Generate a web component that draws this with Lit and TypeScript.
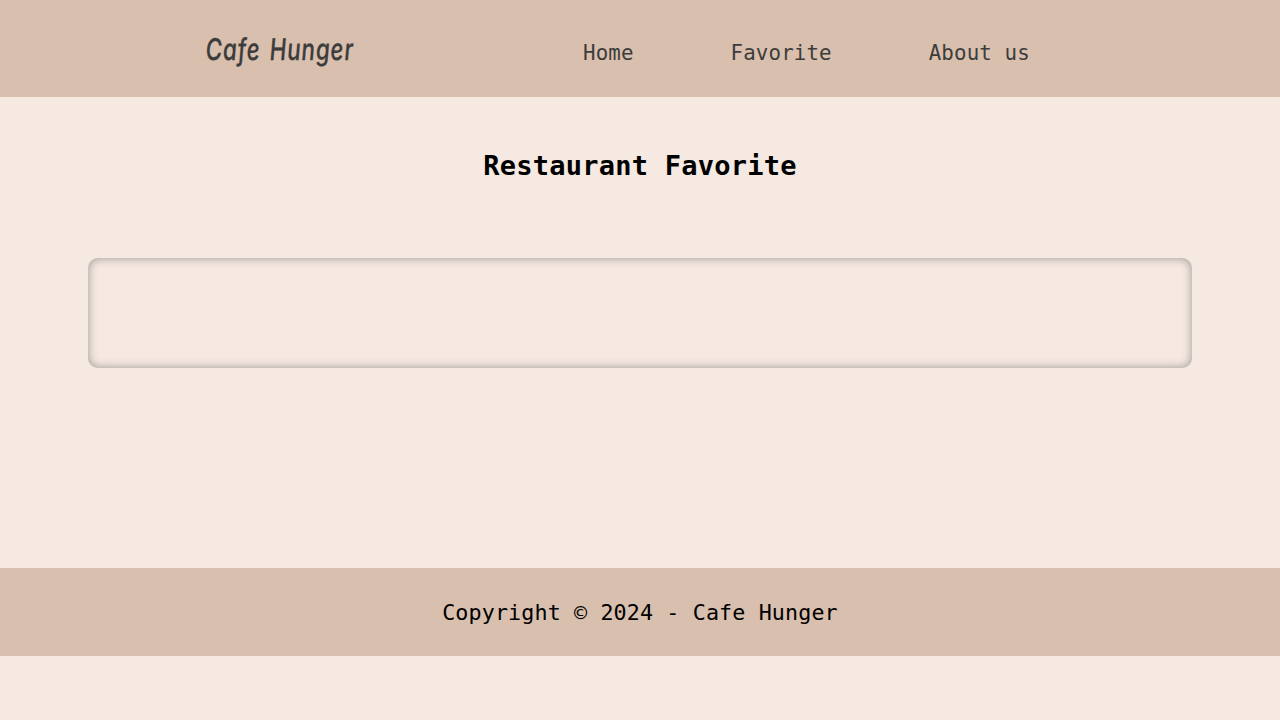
import { LitElement, html, css } from "lit";
import { customElement } from "lit/decorators.js";

@customElement("app-root")
export class AppRoot extends LitElement {
  static styles = css`
    :host {
      display: block;
      min-height: 100vh;
      background: #f5e9e1;
      color: #000;
      font-family: Consolas, "DejaVu Sans Mono", monospace;
    }
    header {
      display: flex;
      height: 97px;
      box-sizing: border-box;
      padding: 30px 0 0 206px;
      background: #d9bfad;
      color: #3c3c3c;
    }
    .brand {
      width: 377px;
      flex: none;
      font: italic 500 30px/38px Inter, sans-serif;
      font-feature-settings: "cv11" 1;
      letter-spacing: 1.2px;
      word-spacing: 3px;
      white-space: nowrap;
      -webkit-text-stroke: 0.3px #3c3c3c;
    }
    .brand span {
      display: inline-block;
      transform: scaleX(0.745) skewX(3deg);
      transform-origin: 0 78%;
    }
    nav {
      display: flex;
      gap: 97px;
      font-size: 20.8px;
      letter-spacing: 0.12px;
      line-height: 47px;
      white-space: nowrap;
    }
    a {
      color: inherit;
      text-decoration: none;
    }
    main {
      height: 471px;
      box-sizing: border-box;
      padding: 51px 88px 0;
    }
    h1 {
      margin: 0 0 74px;
      font-size: 27px;
      line-height: 36px;
      letter-spacing: 0.24px;
      text-align: center;
    }
    .list {
      height: 110px;
      border-radius: 10px;
      box-shadow: inset 0 0 10px rgba(85, 85, 85, 0.56);
    }
    footer {
      height: 88px;
      background: #d9bfad;
      font-size: 21.7px;
      letter-spacing: 0.13px;
      line-height: 90px;
      text-align: center;
    }
  `;

  render() {
    return html`
      <header>
        <div class="brand"><span>Cafe Hunger</span></div>
        <nav>
          <a href="#home">Home</a>
          <a href="#favorite">Favorite</a>
          <a href="#about">About us</a>
        </nav>
      </header>
      <main>
        <h1>Restaurant Favorite</h1>
        <section class="list"></section>
      </main>
      <footer>Copyright © 2024 - Cafe Hunger</footer>
    `;
  }
}
